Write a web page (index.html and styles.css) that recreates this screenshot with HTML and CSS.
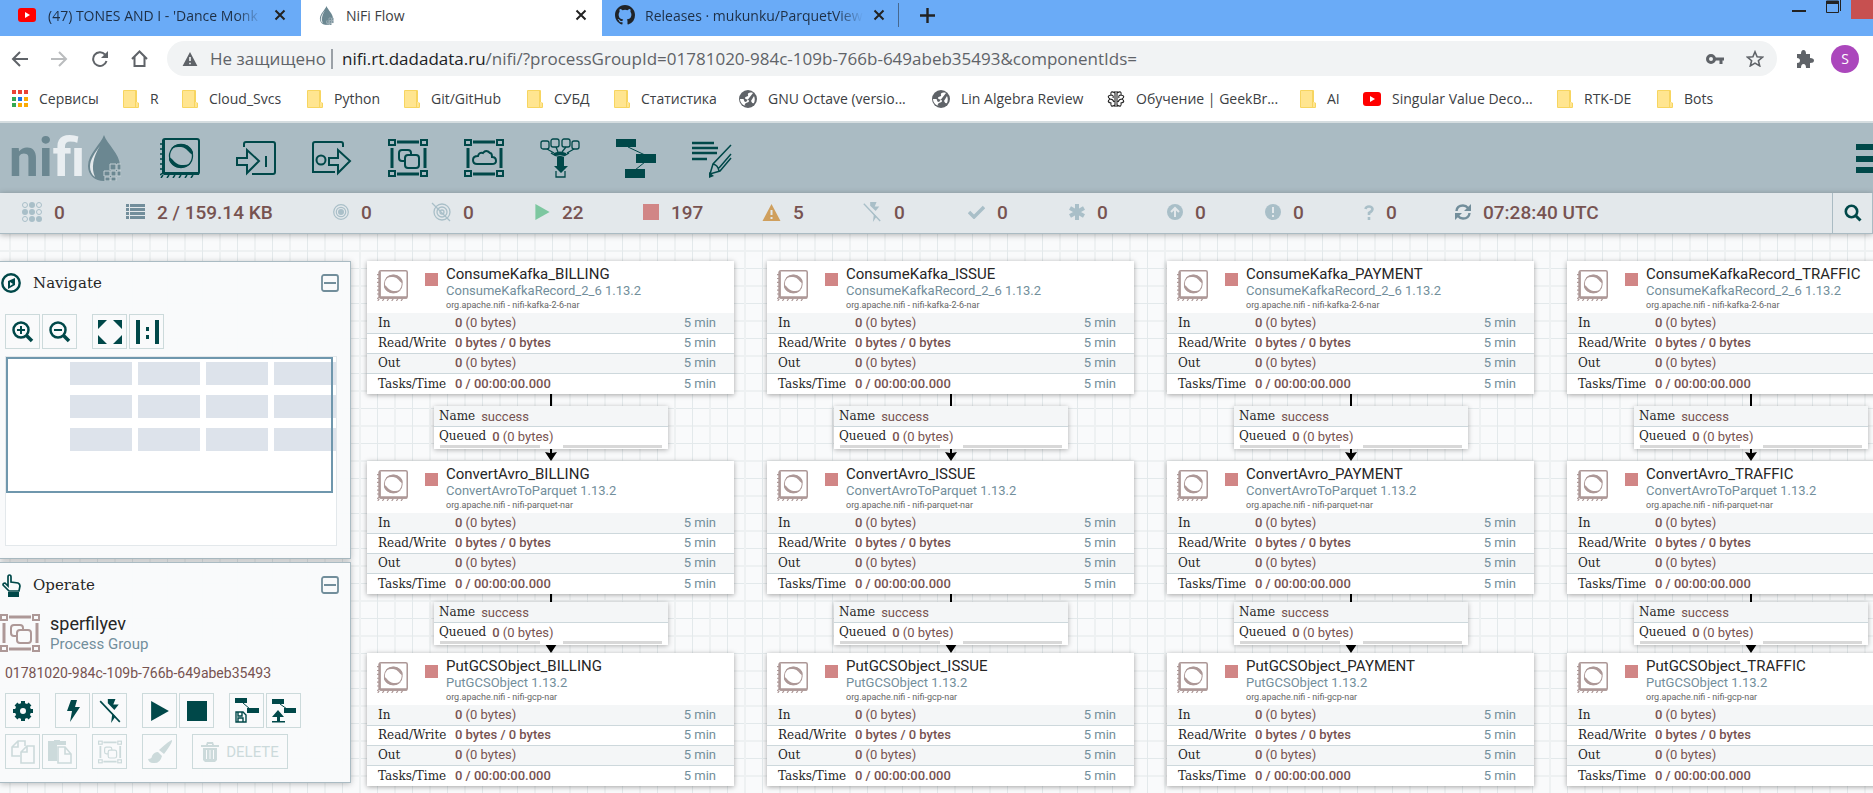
FILE: index.html
```html
<!DOCTYPE html>
<html lang="ru">
<head>
<meta charset="utf-8">
<title>NiFi Flow</title>
<link rel="stylesheet" href="styles.css">
</head>
<body>
<svg class="sprite" aria-hidden="true">
  <symbol id="youtube" viewBox="0 0 18 14"><rect width="18" height="14" rx="3" fill="#f00"/><path d="M7 4l5 3-5 3z" fill="#fff"/></symbol>
  <symbol id="close" viewBox="0 0 12 12"><path d="M1.500 1.500l9 9M10.500 1.500l-9 9" fill="none" stroke="currentColor" stroke-width="2"/></symbol>
  <symbol id="drop" viewBox="0 0 34 46"><path d="M17 0C14 9 1 19 1 31c0 9 7 15 16 15s16-6 16-15C33 19 20 9 17 0z" fill="#6b8791"/><path d="M13 11C8 18 3 24 3 32c0 4 2 8 5 10C4 33 6 22 13 11z" fill="#e3e8eb"/><path d="M23 29h6v6h-6zM30 29h4v6h-4zM17 36h6v5h-6zM24 36h5v5h-5zM30 36h4v5h-4zM24 42h5v4h-5zM18 42h5v4h-5z" fill="#6b8791" stroke="#c3ced3"/></symbol>
  <symbol id="github" viewBox="0 0 16 16"><path fill="#1f2328" d="M8 0C3.580 0 0 3.580 0 8c0 3.540 2.290 6.530 5.470 7.590.4.070.55-.17.55-.38 0-.19-.01-.82-.01-1.490-2.010.37-2.530-.49-2.690-.94-.09-.23-.48-.94-.82-1.130-.28-.15-.68-.52-.01-.53.63-.01 1.080.58 1.230.82.72 1.210 1.870.87 2.330.66.07-.52.28-.87.51-1.070-1.780-.2-3.640-.89-3.640-3.950 0-.87.31-1.590.82-2.150-.08-.2-.36-1.020.08-2.120 0 0 .67-.21 2.200.82a7.600 7.600 0 0 1 4 0c1.530-1.040 2.200-.82 2.200-.82.44 1.100.16 1.920.08 2.120.51.56.82 1.270.82 2.150 0 3.070-1.870 3.750-3.650 3.950.29.25.54.73.54 1.480 0 1.070-.01 1.930-.01 2.200 0 .21.15.46.55.38A8 8 0 0 0 16 8c0-4.420-3.580-8-8-8z"/></symbol>
  <symbol id="folder" viewBox="0 0 16 18"><path d="M1 0h12q1 0 1 1v11l2 1v4q0 1-1 1H1q-1 0-1-1V1q0-1 1-1z" fill="#f7d560"/><path d="M1 1h11v16H1z" fill="#ffe590"/><path d="M13 12h2v5h-2z" fill="#ffe590"/></symbol>
  <symbol id="globe" viewBox="0 0 18 18"><circle cx="9" cy="9" r="9" fill="#5f6368"/><path d="M14 3c-3-1-6 0-5 2s-3 1-3 3 4 1 4 3-3 1-4 3 1 2 1 2C3 15 1 12 1 9h3c2 0 0 3 3 3M15 6c1 2 1 5 0 7-2 1-2-1-3-2" fill="#fff"/></symbol>
  <symbol id="processor" viewBox="0 0 40 40"><g fill="none" stroke="currentColor"><rect x="3" y="1" width="36" height="35" rx="2" stroke-width="2"/><path d="M4 35.500h35M3.500 2v33" stroke-width="3"/><path d="M0 6h3M0 11h3M0 16h3M0 21h3M0 26h3M0 31h3M1 40l2-3M7 40l2-3M13 40l2-3M19 40l2-3M25 40l2-3M31 40l2-3M0 37l3-2" stroke-width="1.500"/><circle cx="21" cy="18" r="11.500" stroke-width="1.300"/></g><path d="M11 11C14 5 29 3 33 14v3c-5-2-5-7-12-8-4 0-7 0-10 2zM31 25C28 31 13 33 9 22v-3c5 2 5 7 12 8 4 0 7 0 10-2z" fill="currentColor"/></symbol>
  <symbol id="input" viewBox="0 0 40 40"><g fill="none" stroke="currentColor" stroke-width="2"><path d="M8 9V6q0-2 2-2h27q2 0 2 2v28q0 2-2 2H16M30 18v11"/><path d="M1 20h10v-8l12 11-12 12v-8H1z"/></g></symbol>
  <symbol id="output" viewBox="0 0 40 40"><g fill="none" stroke="currentColor" stroke-width="2"><path d="M31 9V6q0-2-2-2H3Q1 4 1 6v28h22"/><circle cx="9" cy="22" r="4.500"/><path d="M17 20h9v-8l12 11-12 12v-8h-9z"/></g></symbol>
  <symbol id="frame" viewBox="0 0 40 40"><g fill="none" stroke="currentColor" stroke-width="2"><rect x="1" y="2" width="6" height="5"/><rect x="33" y="2" width="6" height="5"/><rect x="1" y="33" width="6" height="5"/><rect x="33" y="33" width="6" height="5"/><path d="M9 4h22M9 36h22M4 10v20M37 10v20" stroke-width="3"/></g></symbol>
  <symbol id="group" viewBox="0 0 40 40"><use href="#frame"/><path d="M17 23h-3q-3 0-3-3v-5q0-3 3-3h6q3 0 3 3v2M20 17h8q3 0 3 3v7q0 3-3 3h-8q-3 0-3-3v-7q0-3 3-3z" fill="none" stroke="currentColor" stroke-width="2"/></symbol>
  <symbol id="remote" viewBox="0 0 40 40"><use href="#frame"/><path d="M13 26q-4 0-4-4t5-4q1-4 5-3 3-4 7 0 2 0 2 4 4 0 4 4 0 3-4 3z" fill="none" stroke="currentColor" stroke-width="2"/></symbol>
  <symbol id="funnel" viewBox="0 0 40 40"><g fill="none" stroke="currentColor" stroke-width="1.300"><rect x="1" y="3" width="8" height="8" rx="2"/><rect x="11" y="1" width="8" height="8" rx="2"/><rect x="22" y="1" width="8" height="8" rx="2"/><rect x="32" y="3" width="7" height="8" rx="2"/><path d="M7 11l7 4M16 9l2 5M26 9l-4 5M34 11l-7 4M11 15q9 7 18 0M16 33v6h9v-6"/></g><path d="M14 15q6-3 12 0v2H14zM17 19h7v9h4l-7 7-7-7h3z" fill="currentColor"/></symbol>
  <symbol id="template" viewBox="0 0 40 40"><path d="M0 1h20v8H0zM20 16h20v9H20zM9 31h20v9H9z" fill="currentColor"/><path d="M12 9l17 8M29 24l-10 8" stroke="currentColor"/></symbol>
  <symbol id="label" viewBox="0 0 40 40"><g fill="none" stroke="currentColor"><path d="M0 5h22M0 10h26M0 15h25M0 21h15" stroke-width="2.500"/><path d="M39 7L21 26l-3 10 10-3 11-13M27 30l12-14M21 26q5 1 6 7" stroke-width="1.500"/></g><path d="M17 40v-6l5 4z" fill="currentColor"/></symbol>
  <symbol id="threads" viewBox="0 0 20 20"><g fill="currentColor"><circle cx="10" cy="3" r="3"/><circle cx="3" cy="10" r="3"/><circle cx="10" cy="10" r="3"/><circle cx="10" cy="17" r="3"/><circle cx="17" cy="17" r="3"/></g><g fill="none" stroke="currentColor"><circle cx="3" cy="3" r="2.500"/><circle cx="17" cy="3" r="2.500"/><circle cx="17" cy="10" r="2.500"/><circle cx="3" cy="17" r="2.500"/></g></symbol>
  <symbol id="list" viewBox="0 0 19 16"><path d="M0 0h3v3H0zM4 0h15v3H4zM0 4h3v3H0zM4 4h15v3H4zM0 8h3v3H0zM4 8h15v3H4zM0 12h3v3H0zM4 12h15v3H4z" fill="currentColor"/></symbol>
  <symbol id="target" viewBox="0 0 16 16"><g fill="none" stroke="currentColor" stroke-width="1.200"><circle cx="8" cy="8" r="7.300"/><circle cx="8" cy="8" r="4.700"/></g><circle cx="8" cy="8" r="3" fill="currentColor"/></symbol>
  <symbol id="untarget" viewBox="0 0 20 20"><g fill="none" stroke="currentColor" stroke-width="1.300"><circle cx="11" cy="10" r="8"/><circle cx="11" cy="10" r="5"/><circle cx="11" cy="10" r="2"/><path d="M1 1l18 18"/></g></symbol>
  <symbol id="play" viewBox="0 0 16 18"><path d="M0 0l16 9-16 9z" fill="currentColor"/></symbol>
  <symbol id="stop" viewBox="0 0 16 16"><path d="M0 0h16v16H0z" fill="currentColor"/></symbol>
  <symbol id="warn" viewBox="0 0 18 17"><path d="M9 0l9 17H0zM8 6v5h2V6zm0 7v2h2v-2z" fill="currentColor" fill-rule="evenodd"/></symbol>
  <symbol id="bolt" viewBox="0 0 14 22"><path d="M5 0h6L9 7h5L4 22l2-11H1z" fill="currentColor"/></symbol>
  <symbol id="unbolt" viewBox="0 0 20 22"><path d="M8 0h7l-2 5h5l-4 5-6-6zM7 8l8 8-4 6 1-8z" fill="currentColor"/><path d="M1 2l18 19" stroke="currentColor" stroke-width="1.500"/></symbol>
  <symbol id="check" viewBox="0 0 17 14"><path d="M1 7l5 5L16 2" fill="none" stroke="currentColor" stroke-width="3.500"/></symbol>
  <symbol id="asterisk" viewBox="0 0 16 16"><path d="M8 0v16M1 4l14 8M15 4L1 12" stroke="currentColor" stroke-width="4"/></symbol>
  <symbol id="up" viewBox="0 0 16 16"><circle cx="8" cy="8" r="8" fill="currentColor"/><path d="M8 13V4M4 8l4-4 4 4" fill="none" stroke="#e3e8eb" stroke-width="2"/></symbol>
  <symbol id="bang" viewBox="0 0 16 16"><circle cx="8" cy="8" r="8" fill="currentColor"/><path d="M8 3v6M8 11v2" stroke="#e3e8eb" stroke-width="2"/></symbol>
  <symbol id="question" viewBox="0 0 10 15"><path d="M1.500 4Q2 1.500 5 1.500T8.500 4Q8.500 6 5 8v2M5 12v3" fill="none" stroke="currentColor" stroke-width="2.600"/></symbol>
  <symbol id="refresh" viewBox="0 0 16 16"><path d="M1.500 7Q2 1.500 8 1.500q3 0 5 2.500M14.500 9Q14 14.500 8 14.500q-3 0-5-2.500" fill="none" stroke="currentColor" stroke-width="2.400"/><path d="M16 0v7H9zM0 16V9h7z" fill="currentColor"/></symbol>
  <symbol id="search" viewBox="0 0 18 18"><circle cx="7.500" cy="7.500" r="5.700" fill="none" stroke="currentColor" stroke-width="2.600"/><path d="M11.500 11.500l5 5" stroke="currentColor" stroke-width="3"/></symbol>
  <symbol id="zoomin" viewBox="0 0 22 22"><circle cx="9" cy="9" r="7.500" fill="none" stroke="currentColor" stroke-width="2.500"/><path d="M14 14l6 6" stroke="currentColor" stroke-width="3.500"/><path d="M5 9h8M9 5v8" stroke="currentColor" stroke-width="2"/></symbol>
  <symbol id="zoomout" viewBox="0 0 22 22"><circle cx="9" cy="9" r="7.500" fill="none" stroke="currentColor" stroke-width="2.500"/><path d="M14 14l6 6" stroke="currentColor" stroke-width="3.500"/><path d="M5 9h8" stroke="currentColor" stroke-width="2"/></symbol>
  <symbol id="fit" viewBox="0 0 24 24"><path d="M0 0h9L0 9zM24 0v9l-9-9zM0 24v-9l9 9zM24 24h-9l9-9z" fill="currentColor"/></symbol>
  <symbol id="actual" viewBox="0 0 24 24"><path d="M1 0h4v24H1zM20 0h4v24h-4zM11 7h3v4h-3zM11 15h3v4h-3z" fill="currentColor"/></symbol>
  <symbol id="minus" viewBox="0 0 18 18"><rect x="1" y="1" width="16" height="16" rx="2" fill="none" stroke="currentColor" stroke-width="1.800"/><path d="M3 9h12" stroke="currentColor" stroke-width="2"/></symbol>
  <symbol id="compass" viewBox="0 0 20 20"><circle cx="10" cy="10" r="8.700" fill="none" stroke="currentColor" stroke-width="2.400"/><path d="M14 5v7l-7 4V8zM9 9v4l3-2z" fill="currentColor" fill-rule="evenodd"/></symbol>
  <symbol id="hand" viewBox="0 0 20 23"><path d="M7 12V3q0-2 1.500-2T10 3v5l7 1q2 1 2 3l-1 5H8l-6-6q0-2 2-2z" fill="none" stroke="currentColor" stroke-width="1.700"/><path d="M7 18h11v5H7z" fill="currentColor"/></symbol>
  <symbol id="gear" viewBox="0 0 20 20"><circle cx="10" cy="10" r="5.500" fill="none" stroke="currentColor" stroke-width="5"/><path d="M10 0v4M10 16v4M0 10h4M16 10h4M3 3l3 3M14 14l3 3M17 3l-3 3M6 14l-3 3" stroke="currentColor" stroke-width="4"/></symbol>
  <symbol id="savetpl" viewBox="0 0 24 25"><path d="M0 0h12v5H0zM12 10h12v5H12z" fill="currentColor"/><path d="M8 5l7 6" stroke="currentColor"/><path d="M1 14h7l3 3v7H1zM3 14v4h4v-4M3 24v-4h5v4" fill="none" stroke="currentColor" stroke-width="1.400"/></symbol>
  <symbol id="uptpl" viewBox="0 0 24 25"><path d="M0 1h12v5H0zM12 10h12v5H12zM6 12l6 7H8v4H5v-4H0zM0 23h13v1.500H0z" fill="currentColor"/><path d="M8 6l7 5" stroke="currentColor"/></symbol>
  <symbol id="copy" viewBox="0 0 24 24"><path d="M9 16H1V7l6-6h7v5M7 1v6H1M10 23V12l6-6h7v17zM16 6v6h-6" fill="none" stroke="currentColor" stroke-width="1.600"/></symbol>
  <symbol id="paste" viewBox="0 0 24 24"><path d="M0 1h6V0h6v1h6v4H9v16H0z" fill="currentColor"/><path d="M10 23V7h7l6 7v9zM17 7v7h6" fill="none" stroke="currentColor" stroke-width="1.600"/></symbol>
  <symbol id="brush" viewBox="0 0 24 24"><path d="M24 0q1 2-8 14l-5-4Q22 0 24 0zM10 12l4 4q-2 8-9 7-4 0-5-4 4 0 4-3 2-4 6-4z" fill="currentColor"/></symbol>
  <symbol id="trash" viewBox="0 0 18 20"><path d="M0 3h5l1-3h6l1 3h5v2H0zM2 6h14v12l-2 2H4l-2-2zM7 2v1h4V2zM5 8v9h1V8zm3.500 0v9h1V8zM12 8v9h1V8z" fill="currentColor" fill-rule="evenodd"/></symbol>
</svg>

<header class="browser">
  <div class="tabs">
    <div class="tab"><svg width="18" height="14"><use href="#youtube"/></svg><span class="tab-title fade">(47) TONES AND I - 'Dance Monk</span><button class="tab-close" aria-label="Закрыть"><svg width="12" height="12"><use href="#close"/></svg></button></div>
    <div class="tab tab-active"><svg width="15" height="19"><use href="#drop"/></svg><span class="tab-title">NiFi Flow</span><button class="tab-close" aria-label="Закрыть"><svg width="12" height="12"><use href="#close"/></svg></button></div>
    <div class="tab tab-last"><svg width="20" height="20"><use href="#github"/></svg><span class="tab-title fade">Releases · mukunku/ParquetView</span><button class="tab-close" aria-label="Закрыть"><svg width="12" height="12"><use href="#close"/></svg></button></div>
    <button class="new-tab" aria-label="Новая вкладка"><svg width="15" height="15" viewBox="0 0 15 15"><path d="M7.500 0v15M0 7.500h15" stroke="currentColor" stroke-width="2.400"/></svg></button>
    <div class="window-controls">
      <button aria-label="Свернуть"><svg width="14" height="13" viewBox="0 0 14 13"><path d="M0 10h14v2H0z" fill="#222"/></svg></button>
      <button aria-label="Восстановить"><svg width="15" height="13" viewBox="0 0 15 13"><path d="M.5 1v11.500h12V1z" fill="none" stroke="#222"/><path d="M0 1h13v3H0zM14 0h1v11h-1z" fill="#222"/></svg></button>
      <button class="window-close" aria-label="Закрыть окно"></button>
    </div>
  </div>
  <div class="toolbar">
    <button aria-label="Назад"><svg width="17" height="16" viewBox="0 0 17 16"><path d="M17 8H2M9 1L2 8l7 7" fill="none" stroke="#5f6368" stroke-width="2"/></svg></button>
    <button aria-label="Вперёд"><svg width="17" height="16" viewBox="0 0 17 16"><path d="M0 8h15M8 1l7 7-7 7" fill="none" stroke="#babcbe" stroke-width="2"/></svg></button>
    <button aria-label="Обновить"><svg width="17" height="16" viewBox="0 0 17 16"><path d="M14 3.500a6.800 6.800 0 1 0 1.500 6.500" fill="none" stroke="#5f6368" stroke-width="2"/><path d="M17 0v7h-7z" fill="#5f6368"/></svg></button>
    <button aria-label="Домой"><svg width="17" height="17" viewBox="0 0 17 17"><path d="M1 9l7.500-7.500L16 9M3.500 7v9h10V7" fill="none" stroke="#5f6368" stroke-width="2"/></svg></button>
    <div class="omnibox">
      <svg width="16" height="14"><use href="#warn"/></svg>
      <span class="insecure">Не защищено</span>
      <span class="url"><b>nifi.rt.dadadata.ru</b>/nifi/?processGroupId=01781020-984c-109b-766b-649abeb35493&amp;componentIds=</span>
      <button aria-label="Пароли"><svg width="18" height="10" viewBox="0 0 18 10"><circle cx="5" cy="5" r="3.500" fill="none" stroke="#5f6368" stroke-width="3"/><path d="M9 3.500h9v3h-1.500V10h-3V6.500H9z" fill="#5f6368"/></svg></button>
      <button aria-label="В закладки"><svg width="18" height="17" viewBox="0 0 18 17"><path d="M9 1.800l2.100 4.900 5.400.5-4.100 3.500 1.300 5.200L9 13.100l-4.700 2.800 1.300-5.200-4.100-3.500 5.400-.5z" fill="none" stroke="#5f6368" stroke-width="1.600"/></svg></button>
    </div>
    <button aria-label="Расширения"><svg width="18" height="18" viewBox="0 0 18 18"><path d="M1 4h4q0-4 2.500-4T10 4h4v4q4 0 4 2.500T14 13v5h-4q0-4-2.500-4T5 18H1v-5q3 0 3-2.500T1 8z" fill="#5f6368"/></svg></button>
    <button class="avatar">S</button>
  </div>
  <nav class="bookmarks">
    <a href="#"><svg width="16" height="17" viewBox="0 0 16 17"><path d="M0 0h4v4H0zM6 0h4v4H6zM12 0h4v4h-4z" fill="#ea4335"/><path d="M0 7h4v4H0zM0 13h4v4H0z" fill="#34a853"/><path d="M6 7h4v4H6z" fill="#1a73e8"/><path d="M12 7h4v4h-4zM6 13h4v4H6zM12 13h4v4h-4z" fill="#fbab05"/></svg>Сервисы</a>
    <a href="#"><svg width="16" height="18"><use href="#folder"/></svg>R</a>
    <a href="#"><svg width="16" height="18"><use href="#folder"/></svg>Cloud_Svcs</a>
    <a href="#"><svg width="16" height="18"><use href="#folder"/></svg>Python</a>
    <a href="#"><svg width="16" height="18"><use href="#folder"/></svg>Git/GitHub</a>
    <a href="#"><svg width="16" height="18"><use href="#folder"/></svg>СУБД</a>
    <a href="#"><svg width="16" height="18"><use href="#folder"/></svg>Статистика</a>
    <a href="#"><svg width="18" height="18"><use href="#globe"/></svg>GNU Octave (versio...</a>
    <a href="#"><svg width="18" height="18"><use href="#globe"/></svg>Lin Algebra Review</a>
    <a href="#"><svg width="18" height="18" viewBox="0 0 18 18"><path d="M8 1v16M10 1v16M8 3Q3 0 4 5q-5 1-1 4-4 3 1 4-1 5 4 2M10 3q5-3 4 2 5 1 1 4 4 3-1 4 1 5-4 2M4 5q3 0 2 3M3 9q3 0 4 3M14 5q-3 0-2 3M15 9q-3 0-4 3" fill="none" stroke="#222" stroke-width="1.100"/></svg>Обучение | GeekBr...</a>
    <a href="#"><svg width="16" height="18"><use href="#folder"/></svg>AI</a>
    <a href="#"><svg width="18" height="14"><use href="#youtube"/></svg>Singular Value Deco...</a>
    <a href="#"><svg width="16" height="18"><use href="#folder"/></svg>RTK-DE</a>
    <a href="#"><svg width="16" height="18"><use href="#folder"/></svg>Bots</a>
  </nav>
</header>

<div class="nifi-header">
  <div class="logo"><span class="logo-text">ni<i>fi</i></span><svg width="34" height="46"><use href="#drop"/></svg></div>
  <div class="components">
    <button aria-label="Processor"><svg width="40" height="40"><use href="#processor"/></svg></button>
    <button aria-label="Input Port"><svg width="40" height="40"><use href="#input"/></svg></button>
    <button aria-label="Output Port"><svg width="40" height="40"><use href="#output"/></svg></button>
    <button aria-label="Process Group"><svg width="40" height="40"><use href="#group"/></svg></button>
    <button aria-label="Remote Process Group"><svg width="40" height="40"><use href="#remote"/></svg></button>
    <button aria-label="Funnel"><svg width="40" height="40"><use href="#funnel"/></svg></button>
    <button aria-label="Template"><svg width="40" height="40"><use href="#template"/></svg></button>
    <button aria-label="Label"><svg width="40" height="40"><use href="#label"/></svg></button>
  </div>
  <button class="menu" aria-label="Global menu"><svg width="17" height="30" viewBox="0 0 17 30"><path d="M0 1h17v6H0zM0 13h17v6H0zM0 24h17v6H0z" fill="currentColor"/></svg></button>
</div>

<div class="status">
  <div class="stats">
    <span><svg width="20" height="20"><use href="#threads"/></svg>0</span>
    <span class="on"><svg width="19" height="16"><use href="#list"/></svg>2 / 159.14 KB</span>
    <span><svg width="16" height="16"><use href="#target"/></svg>0</span>
    <span><svg width="20" height="20"><use href="#untarget"/></svg>0</span>
    <span class="running"><svg width="15" height="16"><use href="#play"/></svg>22</span>
    <span class="stopped"><svg width="16" height="16"><use href="#stop"/></svg>197</span>
    <span class="invalid"><svg width="19" height="17"><use href="#warn"/></svg>5</span>
    <span><svg width="20" height="20"><use href="#unbolt"/></svg>0</span>
    <span><svg width="17" height="14"><use href="#check"/></svg>0</span>
    <span><svg width="16" height="16"><use href="#asterisk"/></svg>0</span>
    <span><svg width="16" height="16"><use href="#up"/></svg>0</span>
    <span><svg width="16" height="16"><use href="#bang"/></svg>0</span>
    <span><svg width="10" height="15"><use href="#question"/></svg>0</span>
    <span class="on"><svg width="16" height="16"><use href="#refresh"/></svg>07:28:40 UTC</span>
  </div>
  <button class="search" aria-label="Search"><svg width="18" height="18"><use href="#search"/></svg></button>
</div>

<main class="canvas">
  <div id="flow"></div>

  <section class="panel navigate">
    <h2><svg width="20" height="20"><use href="#compass"/></svg>Navigate<button aria-label="Collapse"><svg width="18" height="18"><use href="#minus"/></svg></button></h2>
    <div class="buttons">
      <button aria-label="Zoom In"><svg width="22" height="22"><use href="#zoomin"/></svg></button>
      <button class="gap-after" aria-label="Zoom Out"><svg width="22" height="22"><use href="#zoomout"/></svg></button>
      <button aria-label="Fit"><svg width="24" height="24"><use href="#fit"/></svg></button>
      <button aria-label="Actual size"><svg width="24" height="24"><use href="#actual"/></svg></button>
    </div>
    <div class="birdseye">
      <div class="minis"><i></i><i></i><i></i><i></i><i></i><i></i><i></i><i></i><i></i><i></i><i></i><i></i></div>
      <div class="viewport"></div>
    </div>
  </section>

  <section class="panel operate">
    <h2><svg width="20" height="23"><use href="#hand"/></svg>Operate<button aria-label="Collapse"><svg width="18" height="18"><use href="#minus"/></svg></button></h2>
    <div class="selected">
      <svg width="40" height="40"><use href="#group"/></svg>
      <div><div class="selected-name">sperfilyev</div><div class="selected-type">Process Group</div></div>
    </div>
    <div class="selected-id">01781020-984c-109b-766b-649abeb35493</div>
    <div class="buttons">
      <button class="gap-after" aria-label="Configuration"><svg width="20" height="20"><use href="#gear"/></svg></button>
      <button aria-label="Enable"><svg width="14" height="22"><use href="#bolt"/></svg></button>
      <button class="gap-after" aria-label="Disable"><svg width="22" height="24"><use href="#unbolt"/></svg></button>
      <button aria-label="Start"><svg width="18" height="20"><use href="#play"/></svg></button>
      <button class="gap-after" aria-label="Stop"><svg width="20" height="20"><use href="#stop"/></svg></button>
      <button aria-label="Create Template"><svg width="24" height="25"><use href="#savetpl"/></svg></button>
      <button aria-label="Upload Template"><svg width="24" height="25"><use href="#uptpl"/></svg></button>
    </div>
    <div class="buttons">
      <button disabled aria-label="Copy"><svg width="24" height="24"><use href="#copy"/></svg></button>
      <button class="gap-after" disabled aria-label="Paste"><svg width="24" height="24"><use href="#paste"/></svg></button>
      <button class="gap-after" disabled aria-label="Group"><svg width="24" height="24"><use href="#group"/></svg></button>
      <button class="gap-after" disabled aria-label="Change Color"><svg width="24" height="24"><use href="#brush"/></svg></button>
      <button class="delete" disabled><svg width="18" height="20"><use href="#trash"/></svg>DELETE</button>
    </div>
  </section>
</main>
<script src="app.js"></script>
</body>
</html>
```
FILE: styles.css
```css
* { box-sizing: border-box; }
body {
  margin: 0;
  height: 100vh;
  display: flex;
  flex-direction: column;
  overflow: hidden;
  font-family: Roboto, sans-serif;
  background: #fff;
}
button {
  margin: 0;
  padding: 0;
  border: 0;
  background: none;
  font: inherit;
  color: inherit;
  display: flex;
  align-items: center;
  justify-content: center;
}
svg { flex: none; display: block; }
.sprite { position: absolute; width: 0; height: 0; }

/* Browser chrome */
.browser { font-family: "Open Sans", sans-serif; flex: none; }
.tabs { display: flex; height: 36px; background: #6aabf7; }
.tab {
  width: 301px;
  display: flex;
  align-items: center;
  gap: 12px;
  padding: 0 15px 6px 18px;
  font-size: 14px;
  color: #1e2f45;
}
.tab-active { background: #fff; color: #3c4043; }
.tab:first-child { border-radius: 0 0 8px 0; }
.tab-last { width: 296px; padding-left: 13px; gap: 10px; }
.tab-title { flex: 1; white-space: nowrap; }
.fade {
  -webkit-mask-image: linear-gradient(90deg, #000 88%, transparent);
  mask-image: linear-gradient(90deg, #000 88%, transparent);
}
.tab-close { color: #222; }
.new-tab {
  width: 58px;
  padding-bottom: 6px;
  color: #222;
  background: linear-gradient(#46688f, #46688f) 0 3px / 1px 24px no-repeat;
}
.window-controls { display: flex; gap: 20px; align-items: flex-start; margin-left: auto; }
.window-close { width: 22px; height: 19px; background: #c75050; margin-left: -10px; }

.toolbar { display: flex; align-items: center; gap: 23px; padding: 5px 14px 0 11px; }
.omnibox {
  flex: 1;
  display: flex;
  align-items: center;
  height: 35px;
  margin: 0 -4px 0 -4px;
  padding: 0 13px 0 15px;
  border-radius: 18px;
  background: #f1f3f4;
  color: #5f6368;
  font-size: 17px;
  white-space: nowrap;
}
.insecure { margin: 0 9px 0 12px; padding-right: 5px; border-right: 2px solid #9aa0a6; line-height: 20px; }
.url { flex: 1; }
.url b { font-weight: 400; color: #202124; }
.omnibox button { margin-left: 22px; }
.avatar {
  width: 28px;
  height: 28px;
  margin-left: -6px;
  border-radius: 50%;
  background: #ab47bc;
  color: #fff;
  font-size: 14px;
}
.bookmarks {
  display: grid;
  grid-template-columns: 111px 59px 125px 97px 123px 87px 125px 193px 175px 193px 63px 194px 100px 1fr;
  padding-left: 12px;
  height: 45px;
  font-size: 14px;
}
.bookmarks a {
  display: flex;
  align-items: center;
  gap: 11px;
  color: #3c4043;
  text-decoration: none;
  white-space: nowrap;
}

/* Application header */
.nifi-header {
  flex: none;
  display: flex;
  align-items: center;
  height: 72px;
  border-top: 2px solid #d5dde0;
  background: #aabbc3;
  color: #004849;
}
.logo { display: flex; align-items: center; gap: 3px; width: 160px; padding-left: 9px; }
.logo-text { width: 75px; font-size: 53px; line-height: 60px; font-weight: 700; color: #6b8791; }
.logo-text i { font-style: normal; color: #e9eef1; }
.components { display: flex; gap: 36px; }
.menu { margin-left: auto; }

.status {
  flex: none;
  display: flex;
  height: 41px;
  border-bottom: 1px solid #aabbc3;
  background: #e3e8eb;
  box-shadow: 0 1px 6px rgba(0, 0, 0, .3);
  position: relative;
  z-index: 3;
}
.stats {
  flex: 1;
  display: grid;
  grid-template-columns: 104px 207px 98px 104px 108px 119px 100px 106px 101px 98px 98px 99px 91px 1fr;
  padding: 0 0 2px 22px;
  font-size: 19px;
  font-weight: 500;
  color: #775351;
}
.stats span { display: flex; align-items: center; gap: 12px; white-space: nowrap; }
.stats svg { color: #a9bfc8; }
.stats .on svg { color: #728e9b; }
.stats .running svg { color: #7dc7a0; }
.stats .stopped svg { color: #d18686; }
.stats .invalid svg { color: #cf9f5d; }
.search { width: 41px; border: solid #aabbc3; border-width: 0 1px; color: #004849; }

/* Canvas */
.canvas {
  flex: 1;
  position: relative;
  overflow: hidden;
  background-color: #f9fafb;
  background-image:
    linear-gradient(90deg, #eef1f2 2px, transparent 2px, transparent 18px, #e3e9eb 18px, #e3e9eb 19px, transparent 19px),
    linear-gradient(#eef1f2 2px, transparent 2px, transparent 18px, #e3e9eb 18px, #e3e9eb 19px, transparent 19px);
  background-size: 35px 35px;
  background-position: 9px 16px;
}

.processor {
  position: absolute;
  width: 367px;
  background: #fff;
  box-shadow: 0 1px 5px rgba(0, 0, 0, .35);
  z-index: 1;
}
.processor-head { display: flex; height: 52px; padding: 4px 0 0 10px; }
.processor-head svg { margin: 5px 17px 0 0; color: #ad9897; }
.state { width: 13px; height: 13px; margin: 8px 8px 0 0; background: #d18686; }
.name { font-size: 15px; line-height: 19px; color: #262626; }
.type { font-size: 13px; line-height: 14px; color: #728e9b; }
.bundle { font-size: 9px; line-height: 14px; color: #666; }
.processor table { width: 100%; border-collapse: collapse; table-layout: fixed; font-size: 13px; line-height: 18px; }
.processor th {
  width: 88px;
  padding: 0 0 0 11px;
  text-align: left;
  font: 400 12px/18px "DejaVu Serif", serif;
  color: #262626;
  white-space: nowrap;
}
.processor td { padding: 0; color: #775351; }
.processor td:last-child { width: 80px; padding-right: 18px; text-align: right; color: #728e9b; }
.processor tr { height: 20px; border-bottom: 1px solid #cdd8dc; }
.processor tr:last-child { height: 21px; border: 0; }
.processor tr:nth-child(odd) { background: #f4f6f7; }
b { font-weight: 500; }

.connection { position: absolute; width: 234px; display: flex; flex-direction: column; align-items: center; }
.stem { flex: 1; width: 2px; background: #000; }
.connection-label {
  width: 100%;
  background: #fff;
  box-shadow: 0 1px 5px rgba(0, 0, 0, .3);
  font-size: 13px;
  color: #775351;
}
.connection-label p { display: flex; align-items: center; gap: 6px; height: 18px; margin: 0; padding: 0 5px; }
.connection-label p:first-child { height: 21px; background: #f4f6f7; border-bottom: 1px solid #cdd8dc; }
.connection-label .key { font: 400 12px/18px "DejaVu Serif", serif; color: #262626; }
.meters { display: flex; gap: 23px; padding: 0 6px 1px; }
.meters i { flex: 1; height: 3px; background: #d8d8d8; }

/* Floating panels */
.panel {
  position: absolute;
  left: 0;
  width: 351px;
  border: 1px solid #aabbc3;
  border-left: 0;
  background: rgba(249, 250, 251, .97);
  box-shadow: 0 1px 6px rgba(0, 0, 0, .25);
  z-index: 2;
  color: #004849;
}
.navigate { top: 27px; height: 298px; }
.operate { top: 328px; height: 221px; }
.panel h2 {
  display: flex;
  align-items: center;
  gap: 12px;
  height: 42px;
  margin: 0;
  padding: 0 11px 0 1px;
  font: 400 15px "DejaVu Serif", serif;
  color: #262626;
}
.panel h2 svg { color: #004849; }
.panel h2 button { margin-left: auto; }
.panel h2 button svg { color: #728e9b; }
.buttons { display: flex; gap: 2px; padding-left: 5px; }
.buttons button { width: 35px; height: 35px; border: 1px solid #ccdadb; }
.buttons .gap-after { margin-right: 13px; }
.buttons button:disabled { color: #ccdadb; }
.navigate .buttons { margin: 10px 0 7px; }
.buttons .delete { width: 96px; gap: 7px; font-size: 15px; }
.birdseye { position: relative; width: 332px; height: 190px; margin-left: 5px; overflow: hidden; border: 1px solid #e3e8eb; background: #fff; }
.minis { display: grid; grid-template-columns: repeat(4, 62px); gap: 10px 6px; padding: 5px 0 0 64px; }
.minis i { height: 23px; background: #dde3eb; }
.viewport { position: absolute; inset: 0 3px 52px 0; border: 2px solid #6f97ad; }

.operate h2 { height: 44px; }
.selected { display: flex; gap: 10px; align-items: center; margin-top: 6px; }
.selected svg { color: #ad9897; }
.selected-name { font-size: 18px; line-height: 22px; color: #262626; }
.selected-type { font-size: 15px; line-height: 18px; color: #728e9b; }
.selected-id { padding: 9px 0 9px 5px; font-size: 14px; line-height: 22px; color: #775351; }
.operate .buttons + .buttons { margin-top: 6px; }
```
FILE: app.js
```js
const COLUMNS = [
  { suffix: 'BILLING', source: 'ConsumeKafka' },
  { suffix: 'ISSUE', source: 'ConsumeKafka' },
  { suffix: 'PAYMENT', source: 'ConsumeKafka' },
  { suffix: 'TRAFFIC', source: 'ConsumeKafkaRecord' },
];

const ROWS = [
  { top: 27, type: 'ConsumeKafkaRecord_2_6 1.13.2', bundle: 'org.apache.nifi - nifi-kafka-2-6-nar' },
  { top: 227, name: 'ConvertAvro', type: 'ConvertAvroToParquet 1.13.2', bundle: 'org.apache.nifi - nifi-parquet-nar' },
  { top: 419, name: 'PutGCSObject', type: 'PutGCSObject 1.13.2', bundle: 'org.apache.nifi - nifi-gcp-nar' },
];

const LEFT = 367;
const STEP = 400;
const CARD_HEIGHT = 133;

const processor = (x, row, name) => `
  <article class="processor" style="left:${x}px;top:${row.top}px">
    <div class="processor-head">
      <svg width="31" height="31"><use href="#processor"/></svg>
      <div class="state"></div>
      <div>
        <div class="name">${name}</div>
        <div class="type">${row.type}</div>
        <div class="bundle">${row.bundle}</div>
      </div>
    </div>
    <table>
      <tr><th>In</th><td><b>0</b> (0 bytes)</td><td>5 min</td></tr>
      <tr><th>Read/Write</th><td><b>0 bytes / 0 bytes</b></td><td>5 min</td></tr>
      <tr><th>Out</th><td><b>0</b> (0 bytes)</td><td>5 min</td></tr>
      <tr><th>Tasks/Time</th><td><b>0 / 00:00:00.000</b></td><td>5 min</td></tr>
    </table>
  </article>`;

const connection = (x, from, to) => {
  const top = from + CARD_HEIGHT;
  const height = to - top;
  const arrow = height > 62 ? 12 : 8;
  return `
  <div class="connection" style="left:${x + 67}px;top:${top}px;height:${height}px">
    <div class="stem"></div>
    <div class="connection-label">
      <p><span class="key">Name</span>success</p>
      <p><span class="key">Queued</span><span><b>0</b> (0 bytes)</span></p>
      <div class="meters"><i></i><i></i></div>
    </div>
    <svg width="12" height="${arrow}" viewBox="0 ${12 - arrow} 12 ${arrow}"><path d="M5 0h2v4l5-1-6 9-6-9 5 1z"/></svg>
  </div>`;
};

document.getElementById('flow').innerHTML = COLUMNS.map((col, c) => {
  const x = LEFT + c * STEP;
  return ROWS.map((row, r) =>
    processor(x, row, `${row.name || col.source}_${col.suffix}`) +
    (r < ROWS.length - 1 ? connection(x, row.top, ROWS[r + 1].top) : '')
  ).join('');
}).join('');
```
